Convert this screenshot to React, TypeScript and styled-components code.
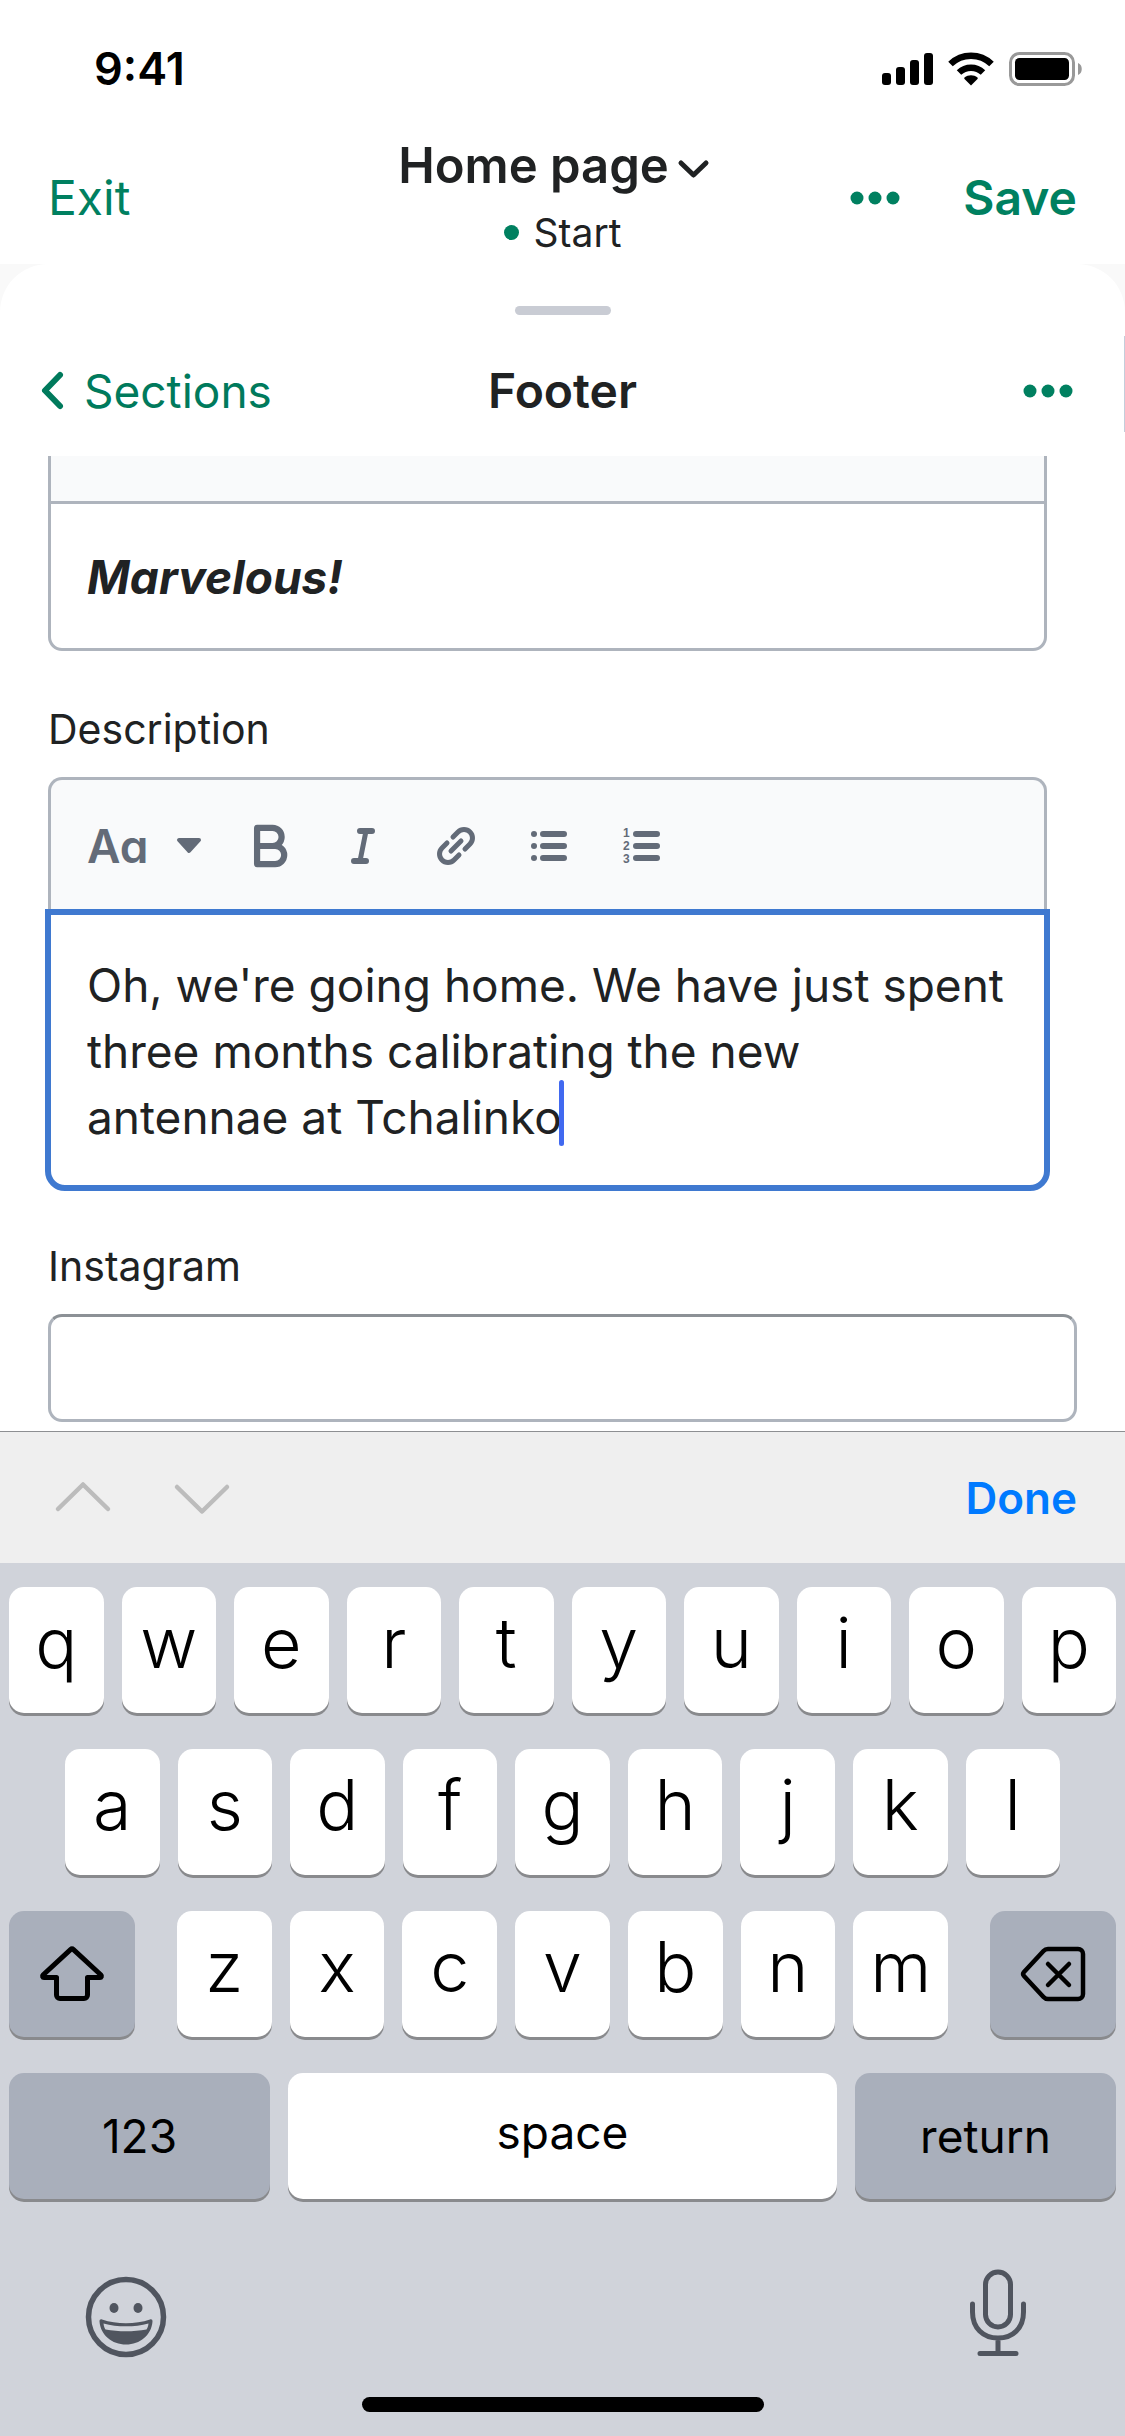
import React, { useLayoutEffect, useRef, useState } from "react";
import styled, { createGlobalStyle, css } from "styled-components";
import { TbBold } from "react-icons/tb";

const color = {
  ink: "#202223",
  green: "#008060",
  greenDark: "#007a5c",
  border: "#aeb4bd",
  inputTop: "#8c9196",
  toolbar: "#f9fafb",
  icon: "#636b78",
  focus: "#3f79d0",
  caret: "#4169f0",
  blue: "#007aff",
  keyboard: "#d0d3da",
  specialKey: "#a9afbb",
  keyShadow: "#898a8d",
  keyIcon: "#50555f",
};

const fontStack = `Inter, "Liberation Sans", sans-serif`;

const GlobalStyle = createGlobalStyle`
  * { box-sizing: border-box; }
  body {
    margin: 0;
    background: #fff;
    color: ${color.ink};
    font-family: ${fontStack};
    -webkit-font-smoothing: antialiased;
  }
  button, input, textarea { font-family: inherit; color: inherit; }
  svg { display: block; flex: none; }
`;

const Screen = styled.div`
  display: flex;
  flex-direction: column;
  min-height: 100vh;
  overflow: hidden;
`;

const PlainButton = styled.button`
  display: flex;
  align-items: center;
  padding: 0;
  border: 0;
  background: none;
  cursor: pointer;
`;

const StatusBar = styled.div`
  display: flex;
  align-items: center;
  justify-content: space-between;
  padding: 39px 42px 32px 94px;
  color: #000;
`;

const Clock = styled.time`
  font-size: 45px;
  line-height: 60px;
  font-weight: 600;
`;

const StatusIcons = styled.div`
  display: flex;
  align-items: center;
  gap: 15px;
`;

const NavBar = styled.header`
  display: grid;
  grid-template-columns: 1fr auto 1fr;
  align-items: center;
  padding: 0 48px;
`;

const TextAction = styled(PlainButton)<{ $strong?: boolean }>`
  color: ${color.green};
  font-size: 48px;
  line-height: 66px;
  font-weight: ${(p) => (p.$strong ? 600 : 400)};
`;

const NavEnd = styled.div`
  display: flex;
  align-items: center;
  justify-content: flex-end;
  gap: 63px;
`;

const PageInfo = styled.div`
  display: flex;
  flex-direction: column;
  align-items: center;
`;

const PagePicker = styled(PlainButton)`
  font-size: 49px;
  line-height: 70px;
  font-weight: 600;
`;

const PageStatus = styled.div`
  display: flex;
  align-items: center;
  gap: 15px;
  font-size: 39px;
  line-height: 63px;
`;

const LiveDot = styled.span`
  width: 15px;
  height: 15px;
  border-radius: 50%;
  background: ${color.green};
`;

const Backdrop = styled.div`
  background: #f9f9f9;
`;

const Sheet = styled.main`
  position: relative;
  border-radius: 48px 48px 0 0;
  background: #fff;

  &::after {
    content: "";
    position: absolute;
    top: 72px;
    right: 0;
    width: 1px;
    height: 96px;
    background: #c3cedb;
  }
`;

const Grabber = styled.div`
  width: 96px;
  height: 9px;
  margin: 0 auto;
  border-radius: 5px;
  background: #c9ccd4;
`;

const SheetTop = styled.div`
  padding-top: 42px;
`;

const SheetHeader = styled.div`
  display: grid;
  grid-template-columns: 1fr auto 1fr;
  align-items: center;
  padding: 43px 36px 32px;
`;

const SheetActions = styled(NavEnd)`
  padding-right: 16px;
`;

const BackLink = styled.a`
  display: flex;
  align-items: center;
  gap: 12px;
  color: ${color.greenDark};
  font-size: 46px;
  line-height: 66px;
  text-decoration: none;
`;

const SheetTitle = styled.h1`
  margin: 0;
  font-size: 48px;
  line-height: 66px;
  font-weight: 600;
`;

const Form = styled.form`
  padding: 0 48px 9px;
`;

const Editor = styled.section`
  margin: 0 30px 48px 0;
`;

const toolbarFrame = css`
  border: 3px solid ${color.border};
  border-bottom: 0;
  background: ${color.toolbar};
`;

const ScrolledToolbar = styled.div`
  ${toolbarFrame}
  border-top: 0;
  height: 45px;
`;

const Toolbar = styled.div`
  ${toolbarFrame}
  display: flex;
  align-items: center;
  padding: 33px 36px;
  border-radius: 14px 14px 0 0;
  color: ${color.icon};
`;

const ToolButton = styled(PlainButton)`
  justify-content: center;
  width: 93px;
  height: 66px;
  color: ${color.icon};
`;

const StyleButton = styled(ToolButton)`
  justify-content: flex-start;
  gap: 28px;
  width: 136px;
  font-size: 46px;
  font-weight: 600;
  font-feature-settings: "cv11";
`;

const editorText = css`
  display: block;
  width: 100%;
  margin: 0;
  padding: 0;
  border: 0;
  outline: 0;
  background: none;
  font-size: 46px;
  line-height: 66px;
`;

const EditorBody = styled.div<{ $focused?: boolean }>`
  position: relative;
  border: 3px solid ${color.border};
  border-radius: 0 0 14px 14px;
  padding: 40px 36px 38px;
  background: #fff;
  ${(p) =>
    p.$focused &&
    css`
      margin: -3px;
      border: 6px solid ${color.focus};
      border-radius: 0 0 20px 20px;
      padding: 37px 36px 35px;
    `}
`;

const HeadingInput = styled.input`
  ${editorText}
  height: 66px;
  font-weight: 700;
  font-style: italic;
`;

const DescriptionArea = styled.textarea`
  ${editorText}
  resize: none;
  overflow: hidden;
  caret-color: transparent;
`;

const Caret = styled.span`
  position: absolute;
  width: 5px;
  height: 66px;
  border-radius: 3px;
  background: ${color.caret};
`;

const Label = styled.label`
  display: block;
  margin-bottom: 18px;
  font-size: 41px;
  line-height: 60px;
`;

const TextInput = styled.input`
  display: block;
  width: 100%;
  height: 108px;
  padding: 0 36px;
  border: 3px solid ${color.border};
  border-top-color: ${color.inputTop};
  border-radius: 14px;
  outline: 0;
  background: #fff;
  font-size: 46px;
`;

const Keyboard = styled.section`
  display: flex;
  flex: 1;
  flex-direction: column;
  background: ${color.keyboard};
  color: #000;
`;

const AccessoryBar = styled.div`
  display: flex;
  align-items: center;
  gap: 49px;
  padding: 33px 48px 32px;
  border-top: 1px solid #8d8f92;
  background: #efefef;
`;

const DoneButton = styled(PlainButton)`
  margin-left: auto;
  color: ${color.blue};
  font-size: 44px;
  line-height: 66px;
  font-weight: 600;
`;

const Keys = styled.div`
  display: flex;
  flex-direction: column;
  gap: 36px;
  padding: 24px 9px 0;
`;

const KeyRow = styled.div<{ $inset?: boolean }>`
  display: flex;
  gap: 18px;
  padding: 0 ${(p) => (p.$inset ? 56 : 0)}px;
`;

const LetterGroup = styled.div`
  display: flex;
  flex: 1;
  gap: 18px;
  margin: 0 24px;
`;

const Key = styled.button`
  display: flex;
  flex: 1 1 0;
  align-items: center;
  justify-content: center;
  min-width: 0;
  height: 126px;
  padding: 0 0 14px;
  border: 0;
  border-radius: 15px;
  background: #fff;
  box-shadow: 0 3px 0 ${color.keyShadow};
  font-size: 70px;
  line-height: 90px;
  font-weight: 350;
  cursor: pointer;
`;

const WideKey = styled(Key)<{ $special?: boolean; $width?: number }>`
  ${(p) => p.$width && `flex: 0 0 ${p.$width}px;`}
  padding: ${(p) => (p.$special ? "0" : "0 0 8px")};
  background: ${(p) => (p.$special ? color.specialKey : "#fff")};
  font-size: 46px;
  font-weight: 400;
`;

const KeyboardFooter = styled.div`
  display: flex;
  justify-content: space-between;
  align-items: flex-end;
  padding: 70px 97px 38px 84px;
`;

const HomeIndicator = styled.div`
  width: 402px;
  height: 15px;
  margin: 0 auto 24px;
  border-radius: 8px;
  background: #000;
`;

const MoreIcon = () => (
  <svg width="50" height="14" viewBox="0 0 50 14" fill="currentColor" aria-hidden>
    <circle cx="7" cy="7" r="6.5" />
    <circle cx="25" cy="7" r="6.5" />
    <circle cx="43" cy="7" r="6.5" />
  </svg>
);

const SignalIcon = () => (
  <svg width="51" height="34" viewBox="0 0 51 34" aria-hidden>
    <rect x="0" y="21" width="9" height="12" rx="3" />
    <rect x="14" y="15" width="9" height="18" rx="3" />
    <rect x="28" y="8" width="9" height="25" rx="3" />
    <rect x="42" y="1" width="9" height="32" rx="3" />
  </svg>
);

const WifiIcon = () => (
  <svg width="46" height="34" viewBox="0 0 46 34" aria-hidden>
    <path d="M23 33.5 16.5 27a1 1 0 0 1 0-1.400c3.700-3.200 9.300-3.200 13 0a1 1 0 0 1 0 1.400Z" />
    <path d="M11 20.500a17.500 17.500 0 0 1 24 0" fill="none" stroke="#000" strokeWidth="6.500" />
    <path d="M2.500 12a29.500 29.500 0 0 1 41 0" fill="none" stroke="#000" strokeWidth="6.500" />
  </svg>
);

const BatteryIcon = () => (
  <svg width="74" height="34" viewBox="0 0 74 34" aria-hidden>
    <rect x="1.500" y="1.500" width="63" height="31" rx="9" fill="none" stroke="#999" strokeWidth="3" />
    <rect x="6" y="6" width="54" height="22" rx="4.500" />
    <path d="M69 11c5 1.500 5 10.500 0 12Z" fill="#999" />
  </svg>
);

const PickerChevron = () => (
  <svg width="58" height="54" viewBox="0 0 58 54" fill="none" stroke="currentColor" strokeWidth="5" strokeLinecap="round" strokeLinejoin="round" aria-hidden>
    <path d="m12 24 12.500 12L37 24" />
  </svg>
);

const BackChevron = () => (
  <svg width="36" height="60" viewBox="0 0 36 60" fill="none" stroke="currentColor" strokeWidth="6" strokeLinecap="round" strokeLinejoin="round" aria-hidden>
    <path d="M24 14 9 29.500 24 45" />
  </svg>
);

const FieldChevron = ({ up }: { up?: boolean }) => (
  <svg width="70" height="66" viewBox="0 0 70 66" fill="none" stroke="#bcbcbc" strokeWidth="4.500" strokeLinecap="round" strokeLinejoin="round" aria-hidden>
    <path d={up ? "M10 44 35 19.500 60 44" : "M10 22 35 46.500 60 22"} />
  </svg>
);

const DownTriangle = () => (
  <svg width="26" height="18" viewBox="0 0 26 18" fill="currentColor" stroke="currentColor" strokeWidth="4" strokeLinejoin="round" aria-hidden>
    <path d="M3 3h20L13 14Z" />
  </svg>
);

const ItalicIcon = () => (
  <svg width="48" height="48" viewBox="0 0 48 48" fill="none" stroke="currentColor" strokeLinecap="round" aria-hidden>
    <path d="M21 9h12M15 39h12" strokeWidth="6" />
    <path d="m27 9-6 30" strokeWidth="5" />
  </svg>
);

const LinkIcon = () => (
  <svg width="48" height="48" viewBox="0 0 48 48" fill="none" stroke="currentColor" strokeWidth="5" strokeLinecap="round" strokeLinejoin="round" aria-hidden>
    <path d="m19 29 10-10" />
    <path d="m21 15 5-5a8.500 8.500 0 0 1 12 0 8.500 8.500 0 0 1 0 12l-5 5" />
    <path d="m15 21-5 5a8.500 8.500 0 0 0 0 12 8.500 8.500 0 0 0 12 0l5-5" />
  </svg>
);

const ListLines = () => (
  <path d="M18 12h21M18 24h21M18 36h21" stroke="currentColor" strokeWidth="6" strokeLinecap="round" />
);

const BulletListIcon = () => (
  <svg width="48" height="48" viewBox="0 0 48 48" aria-hidden>
    <ListLines />
    <g fill="currentColor">
      <circle cx="9" cy="12" r="3" />
      <circle cx="9" cy="24" r="3" />
      <circle cx="9" cy="36" r="3" />
    </g>
  </svg>
);

const NumberedListIcon = () => (
  <svg width="48" height="48" viewBox="0 0 48 48" aria-hidden>
    <ListLines />
    <g fill="currentColor" fontFamily="Liberation Sans, sans-serif" fontWeight="700" fontSize="12">
      <text x="5" y="15">1</text>
      <text x="5" y="28">2</text>
      <text x="5" y="41">3</text>
    </g>
  </svg>
);

const ShiftIcon = () => (
  <svg width="66" height="60" viewBox="0 0 66 60" fill="none" stroke="#000" strokeWidth="5" strokeLinejoin="round" aria-hidden>
    <path d="M31.500 5.600a2.200 2.200 0 0 1 3 0L62 31a1.500 1.500 0 0 1-1 2.600H48.500V51a3.500 3.500 0 0 1-3.500 3.500H21a3.500 3.500 0 0 1-3.500-3.500V33.600H5A1.500 1.500 0 0 1 4 31Z" />
  </svg>
);

const DeleteIcon = () => (
  <svg width="66" height="60" viewBox="0 0 66 60" fill="none" stroke="#000" strokeWidth="4.500" strokeLinecap="round" strokeLinejoin="round" aria-hidden>
    <path d="M28 5h30a5 5 0 0 1 5 5v40a5 5 0 0 1-5 5H28a6 6 0 0 1-4.500-2L4 32a3 3 0 0 1 0-4L23.500 7A6 6 0 0 1 28 5Z" />
    <path d="m28 20 21 21M49 20 28 41" />
  </svg>
);

const EmojiIcon = () => (
  <svg width="84" height="84" viewBox="0 0 84 84" fill={color.keyIcon} aria-hidden>
    <circle cx="42" cy="42" r="37.500" fill="none" stroke={color.keyIcon} strokeWidth="5.500" />
    <ellipse cx="30" cy="33" rx="4.500" ry="5" />
    <ellipse cx="54" cy="33" rx="4.500" ry="5" />
    <path
      fillRule="evenodd"
      d="M18 44.500c15 5 33 5 48 0 1.500-.5 2.600.2 2.500 2C67.500 60 56 69.500 42 69.500S16.500 60 15.500 46.500c-.1-1.800 1-2.500 2.500-2ZM19.500 48.500c.4 3.200 1.200 5 2 6 13 2.400 28 2.400 41 0 .8-1 1.600-2.800 2-6-14 3.800-31 3.800-45 0Z"
    />
  </svg>
);

const MicIcon = () => (
  <svg width="60" height="90" viewBox="0 0 60 90" fill="none" stroke={color.keyIcon} strokeWidth="5" strokeLinecap="round" aria-hidden>
    <rect x="17.500" y="3" width="25" height="55" rx="12.500" />
    <path d="M4.500 35v8C4.500 59 15 69 30 69s25.500-10 25.500-26v-8M30 69v15M12 84.500h36" />
  </svg>
);

const TEXT_SIZE = 46;
const LINE_HEIGHT = 66;
const BODY_PADDING = 36;
const CARET_OVERLAP = 3;

/** Wraps the text the way the text area does and returns the end of its last line. */
function measureCaret(area: HTMLTextAreaElement) {
  const ctx = document.createElement("canvas").getContext("2d");
  if (!ctx) return null;
  ctx.font = `${TEXT_SIZE}px ${fontStack}`;
  let line = "";
  let row = 0;
  for (const word of area.value.split(" ")) {
    const next = line ? `${line} ${word}` : word;
    if (line && ctx.measureText(next).width > area.clientWidth) {
      line = word;
      row += 1;
    } else {
      line = next;
    }
  }
  return {
    left: Math.round(BODY_PADDING + ctx.measureText(line).width) - CARET_OVERLAP,
    top: BODY_PADDING + row * LINE_HEIGHT - 3,
  };
}

function DescriptionField() {
  const area = useRef<HTMLTextAreaElement>(null);
  const [text, setText] = useState(
    "Oh, we're going home. We have just spent three months calibrating the new antennae at Tchalinko"
  );
  const [caret, setCaret] = useState<{ left: number; top: number } | null>(null);

  useLayoutEffect(() => {
    const update = () => area.current && setCaret(measureCaret(area.current));
    update();
    window.addEventListener("resize", update);
    return () => window.removeEventListener("resize", update);
  }, [text]);

  return (
    <EditorBody $focused>
      <DescriptionArea
        id="description"
        ref={area}
        rows={3}
        spellCheck={false}
        value={text}
        onChange={(e) => setText(e.target.value)}
      />
      {caret && <Caret style={caret} />}
    </EditorBody>
  );
}

const letterKeys = (letters: string) =>
  letters.split("").map((l) => (
    <Key key={l} type="button">
      {l}
    </Key>
  ));

export default function App() {
  return (
    <Screen>
      <GlobalStyle />
      <StatusBar>
        <Clock>9:41</Clock>
        <StatusIcons>
          <SignalIcon />
          <WifiIcon />
          <BatteryIcon />
        </StatusIcons>
      </StatusBar>

      <NavBar>
        <TextAction type="button">Exit</TextAction>
        <PageInfo>
          <PagePicker type="button">
            Home page
            <PickerChevron />
          </PagePicker>
          <PageStatus>
            <LiveDot />
            Start
          </PageStatus>
        </PageInfo>
        <NavEnd>
          <TextAction type="button" aria-label="More actions">
            <MoreIcon />
          </TextAction>
          <TextAction type="button" $strong>
            Save
          </TextAction>
        </NavEnd>
      </NavBar>

      <Backdrop>
        <Sheet>
          <SheetTop>
            <Grabber />
          </SheetTop>
          <SheetHeader>
            <BackLink href="#sections">
              <BackChevron />
              Sections
            </BackLink>
            <SheetTitle>Footer</SheetTitle>
            <SheetActions>
              <TextAction type="button" aria-label="Section actions">
                <MoreIcon />
              </TextAction>
            </SheetActions>
          </SheetHeader>

          <Form>
            <Editor>
              <ScrolledToolbar />
              <EditorBody>
                <HeadingInput aria-label="Heading" defaultValue="Marvelous!" spellCheck={false} />
              </EditorBody>
            </Editor>

            <Label htmlFor="description">Description</Label>
            <Editor>
              <Toolbar role="toolbar" aria-label="Formatting">
                <StyleButton type="button" aria-label="Aa, text style">
                  Aa
                  <DownTriangle />
                </StyleButton>
                <ToolButton type="button" aria-label="Bold">
                  <TbBold size={62} strokeWidth={2.4} />
                </ToolButton>
                <ToolButton type="button" aria-label="Italic">
                  <ItalicIcon />
                </ToolButton>
                <ToolButton type="button" aria-label="Link">
                  <LinkIcon />
                </ToolButton>
                <ToolButton type="button" aria-label="Bulleted list">
                  <BulletListIcon />
                </ToolButton>
                <ToolButton type="button" aria-label="Numbered list">
                  <NumberedListIcon />
                </ToolButton>
              </Toolbar>
              <DescriptionField />
            </Editor>

            <Label htmlFor="instagram">Instagram</Label>
            <TextInput id="instagram" type="text" />
          </Form>
        </Sheet>
      </Backdrop>

      <Keyboard aria-label="Keyboard">
        <AccessoryBar>
          <PlainButton type="button" aria-label="Previous field">
            <FieldChevron up />
          </PlainButton>
          <PlainButton type="button" aria-label="Next field">
            <FieldChevron />
          </PlainButton>
          <DoneButton type="button">Done</DoneButton>
        </AccessoryBar>
        <Keys>
          <KeyRow>{letterKeys("qwertyuiop")}</KeyRow>
          <KeyRow $inset>{letterKeys("asdfghjkl")}</KeyRow>
          <KeyRow>
            <WideKey type="button" $special $width={126} aria-label="Shift">
              <ShiftIcon />
            </WideKey>
            <LetterGroup>{letterKeys("zxcvbnm")}</LetterGroup>
            <WideKey type="button" $special $width={126} aria-label="Delete">
              <DeleteIcon />
            </WideKey>
          </KeyRow>
          <KeyRow>
            <WideKey type="button" $special $width={261}>
              123
            </WideKey>
            <WideKey type="button">space</WideKey>
            <WideKey type="button" $special $width={261}>
              return
            </WideKey>
          </KeyRow>
        </Keys>
        <KeyboardFooter>
          <PlainButton type="button" aria-label="Emoji">
            <EmojiIcon />
          </PlainButton>
          <PlainButton type="button" aria-label="Dictate">
            <MicIcon />
          </PlainButton>
        </KeyboardFooter>
        <HomeIndicator />
      </Keyboard>
    </Screen>
  );
}
